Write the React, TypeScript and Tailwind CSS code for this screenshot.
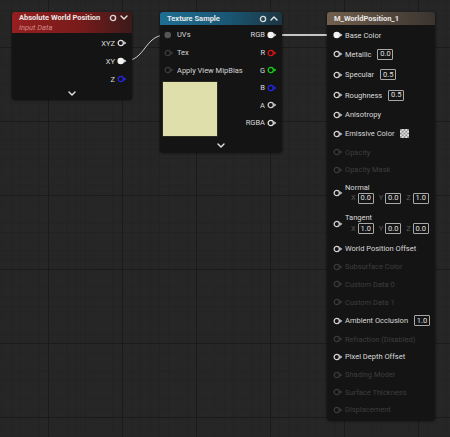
import React from "react";

function Pin({
  color = "#d2d2d2",
  filled = false,
  arrow = true,
}: {
  color?: string;
  filled?: boolean;
  arrow?: boolean;
}) {
  return (
    <svg width="10" height="8" viewBox="0 0 10 8" className="shrink-0 block">
      {filled ? (
        <circle cx="3.75" cy="4" r="3.3" fill={color} />
      ) : (
        <circle cx="3.75" cy="4" r="2.6" fill="none" stroke={color} strokeWidth="1.3" />
      )}
      {arrow && <path d="M7.2 2.3 L9.3 4 L7.2 5.7 Z" fill={color} />}
    </svg>
  );
}

function Chevron({ up = false }: { up?: boolean }) {
  return (
    <svg width="8" height="5" viewBox="0 0 8 5" className="block">
      <path
        d={up ? "M1 4 L4 1 L7 4" : "M1 1 L4 4 L7 1"}
        fill="none"
        stroke="#e6e6e6"
        strokeWidth="1.4"
        strokeLinecap="round"
        strokeLinejoin="round"
      />
    </svg>
  );
}

function PreviewIcon() {
  return (
    <svg width="8" height="8" viewBox="0 0 8 8" className="block">
      <circle cx="4" cy="4" r="2.6" fill="none" stroke="#d8d8d8" strokeWidth="1.4" />
    </svg>
  );
}

function Val({ v }: { v: string }) {
  return (
    <span className="inline-flex h-[11px] w-[16px] items-center justify-center rounded-[1px] border border-[#a8a8a8] text-[7.5px] leading-none text-[#e0e0e0]">
      {v}
    </span>
  );
}

function Checker() {
  return (
    <svg width="9" height="9" viewBox="0 0 9 9" className="block shrink-0">
      <rect width="9" height="9" fill="#e8e8e8" />
      {[0, 1, 2, 3, 4].map((r) =>
        [0, 1, 2, 3, 4].map((c) =>
          (r + c) % 2 === 0 ? (
            <rect key={`${r}-${c}`} x={c * 1.8} y={r * 1.8} width="1.8" height="1.8" fill="#8a8a8a" />
          ) : null
        )
      )}
    </svg>
  );
}

type Row = {
  label: string;
  h: string;
  filled?: boolean;
  dim?: boolean;
  val?: string;
  checker?: boolean;
  vec?: [string, string, string];
};

const rows: Row[] = [
  { label: "Base Color", h: "h-[18px]", filled: true },
  { label: "Metallic", h: "h-[20px]", val: "0.0" },
  { label: "Specular", h: "h-[21px]", val: "0.5" },
  { label: "Roughness", h: "h-[20px]", val: "0.5" },
  { label: "Anisotropy", h: "h-[19px]" },
  { label: "Emissive Color", h: "h-[19px]", checker: true },
  { label: "Opacity", h: "h-[18px]", dim: true },
  { label: "Opacity Mask", h: "h-[17px]", dim: true },
  { label: "Normal", h: "h-[30px]", vec: ["0.0", "0.0", "1.0"] },
  { label: "Tangent", h: "h-[31px]", vec: ["1.0", "0.0", "0.0"] },
  { label: "World Position Offset", h: "h-[19px]" },
  { label: "Subsurface Color", h: "h-[17.5px]", dim: true },
  { label: "Custom Data 0", h: "h-[17.5px]", dim: true },
  { label: "Custom Data 1", h: "h-[18px]", dim: true },
  { label: "Ambient Occlusion", h: "h-[19px]", val: "1.0" },
  { label: "Refraction (Disabled)", h: "h-[18px]", dim: true },
  { label: "Pixel Depth Offset", h: "h-[17.5px]" },
  { label: "Shading Model", h: "h-[18px]", dim: true },
  { label: "Surface Thickness", h: "h-[17.5px]", dim: true },
  { label: "Displacement", h: "h-[17.5px]", dim: true },
];

function MatRow({ r }: { r: Row }) {
  const pinColor = r.dim ? "#3a3a3a" : r.filled ? "#f2f2f2" : "#d2d2d2";
  const textColor = r.dim ? "text-[#3e3e3e]" : "text-[#dadada]";
  if (r.vec) {
    return (
      <div className={`flex items-center gap-[2px] pl-[6px] ${r.h}`}>
        <Pin color={pinColor} />
        <div className="flex flex-col">
          <span className={`text-[7.5px] leading-[9px] ${textColor}`}>{r.label}</span>
          <div className="ml-[6px] mt-[1px] flex items-center gap-[5px] text-[7.5px] leading-none text-[#5a5a5a]">
            {(["X", "Y", "Z"] as const).map((a, i) => (
              <span key={a} className="flex items-center gap-[2px]">
                <span>{a}</span>
                <Val v={r.vec![i]} />
              </span>
            ))}
          </div>
        </div>
      </div>
    );
  }
  return (
    <div className={`flex items-center gap-[2px] pl-[6px] ${r.h}`}>
      <Pin color={pinColor} filled={r.filled} />
      <span className={`text-[7.5px] leading-[9px] whitespace-nowrap ${textColor}`}>{r.label}</span>
      {r.val && (
        <span className="ml-[4px] flex">
          <Val v={r.val} />
        </span>
      )}
      {r.checker && (
        <span className="ml-[4px] flex">
          <Checker />
        </span>
      )}
    </div>
  );
}

export default function App() {
  return (
    <div className="relative h-[437px] w-[450px] overflow-hidden bg-[#262626] [font-family:Roboto,'Liberation_Sans',sans-serif] [background-image:linear-gradient(to_right,#1b1b1b_1px,transparent_1px),linear-gradient(to_bottom,#1b1b1b_1px,transparent_1px),linear-gradient(to_right,#232323_1px,transparent_1px),linear-gradient(to_bottom,#232323_1px,transparent_1px)] [background-size:74px_74px,74px_74px,9.25px_9.25px,9.25px_9.25px] [background-position:48px_47px,48px_47px,48px_47px,48px_47px]">
      {/* wires */}
      <svg className="pointer-events-none absolute inset-0" width="450" height="437">
        <path d="M124 61 C 146 61, 144 35, 166 35" fill="none" stroke="#d0d0d0" strokeWidth="1" />
        <path d="M276 35 L 334 35" fill="none" stroke="#c6c6c6" strokeWidth="1.8" />
      </svg>

      {/* Absolute World Position */}
      <div className="absolute left-[12px] top-[12px] w-[120px] overflow-hidden rounded-[3px] bg-[#141414] shadow-[0_1px_3px_rgba(0,0,0,0.7)]">
        <div className="flex h-[21px] items-start justify-between bg-[linear-gradient(to_right,#951f1f,#7a1b1b_55%,#3c1a1a)] pl-[7px] pr-[4px] pt-[1px]">
          <div className="flex flex-col">
            <span className="text-[7.5px] font-bold leading-[9px] text-[#e8e8e8]">Absolute World Position</span>
            <span className="mt-[1px] text-[7.5px] italic leading-[9px] text-[#d08a8a]">Input Data</span>
          </div>
          <div className="flex h-[9px] items-center gap-[3px]">
            <PreviewIcon />
            <Chevron />
          </div>
        </div>
        <div className="flex flex-col pt-[1px] pb-[1px]">
          {[
            { l: "XYZ", c: "#e0e0e0", f: false },
            { l: "XY", c: "#f2f2f2", f: true },
            { l: "Z", c: "#2626e8", f: false },
          ].map((p) => (
            <div key={p.l} className="flex h-[18px] items-center justify-end gap-[2px] pr-[5px]">
              <span className="text-[7.5px] leading-[9px] text-[#dadada]">{p.l}</span>
              <Pin color={p.c} filled={p.f} />
            </div>
          ))}
          <div className="flex h-[10px] items-center justify-center">
            <Chevron />
          </div>
        </div>
      </div>

      {/* Texture Sample */}
      <div className="absolute left-[160px] top-[12px] w-[122px] overflow-hidden rounded-[3px] bg-[#141414] shadow-[0_1px_3px_rgba(0,0,0,0.7)]">
        <div className="flex h-[13px] items-center justify-between bg-[linear-gradient(to_right,#1f6f93,#1a5775_55%,#1c3542)] pl-[7px] pr-[4px]">
          <span className="text-[7.5px] font-bold leading-[9px] text-[#e8e8e8]">Texture Sample</span>
          <div className="flex items-center gap-[3px]">
            <PreviewIcon />
            <Chevron up />
          </div>
        </div>
        <div className="flex justify-between pt-[1.2px]">
          <div className="flex flex-col">
            {[
              { l: "UVs", c: "#555555", f: true, a: false },
              { l: "Tex", c: "#3c3c3c", f: false, a: true },
              { l: "Apply View MipBias", c: "#3c3c3c", f: false, a: true },
            ].map((p) => (
              <div key={p.l} className="flex h-[17.6px] items-center gap-[3px] pl-[4px]">
                <Pin color={p.c} filled={p.f} arrow={p.a} />
                <span className="whitespace-nowrap text-[7.5px] leading-[9px] text-[#d6d6d6]">{p.l}</span>
              </div>
            ))}
            <div className="ml-[2px] mt-[2px] h-[56px] w-[56px] border border-[#2a2a22] bg-[#dedfab]" />
          </div>
          <div className="flex flex-col">
            {[
              { l: "RGB", c: "#f2f2f2", f: true },
              { l: "R", c: "#e01414", f: false },
              { l: "G", c: "#14d414", f: false },
              { l: "B", c: "#2626f0", f: false },
              { l: "A", c: "#cfcfcf", f: false },
              { l: "RGBA", c: "#e0e0e0", f: false },
            ].map((p) => (
              <div key={p.l} className="flex h-[17.6px] items-center justify-end gap-[2px] pr-[5px]">
                <span className="text-[7.5px] leading-[9px] text-[#dadada]">{p.l}</span>
                <Pin color={p.c} filled={p.f} />
              </div>
            ))}
          </div>
        </div>
        <div className="mt-[4px] flex h-[10px] items-center justify-center">
          <Chevron />
        </div>
        <div className="h-[1px]" />
      </div>

      {/* Material result node */}
      <div className="absolute left-[327px] top-[12px] h-[408px] w-[108px] overflow-hidden rounded-[3px] bg-[#141414] shadow-[0_1px_3px_rgba(0,0,0,0.7)]">
        <div className="flex h-[13px] items-center bg-[linear-gradient(to_right,#72604d,#574a3e_50%,#3a3430)] pl-[7px]">
          <span className="text-[7.5px] font-bold leading-[9px] text-[#e8e8e8]">M_WorldPosition_1</span>
        </div>
        <div className="flex flex-col pt-[1px]">
          {rows.map((r) => (
            <MatRow key={r.label} r={r} />
          ))}
        </div>
      </div>
    </div>
  );
}
